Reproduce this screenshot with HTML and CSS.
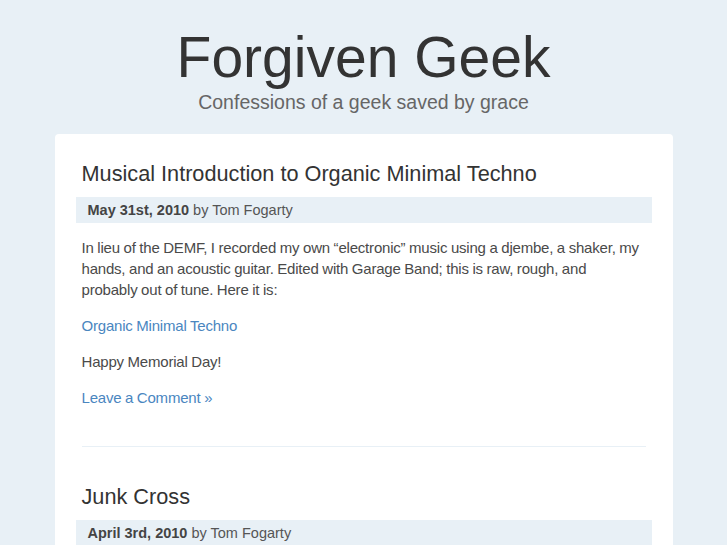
FILE: index.html
```html
<!DOCTYPE html>
<html>
<head>
<meta charset="utf-8">
<link rel="stylesheet" href="styles.css">
</head>
<body>
<header class="site-header">
  <h1 class="site-title">Forgiven Geek</h1>
  <p class="site-tagline">Confessions of a geek saved by grace</p>
</header>
<main class="card">
  <article class="post">
    <h2 class="post-title">Musical Introduction to Organic Minimal Techno</h2>
    <div class="post-meta"><strong>May 31st, 2010</strong> by Tom Fogarty</div>
    <div class="post-body">
      <p>In lieu of the DEMF, I recorded my own “electronic” music using a djembe, a shaker, my hands, and an acoustic guitar. Edited with Garage Band; this is raw, rough, and probably out of tune. Here it is:</p>
      <p><a href="#">Organic Minimal Techno</a></p>
      <p>Happy Memorial Day!</p>
      <p><a href="#">Leave a Comment »</a></p>
    </div>
  </article>
  <hr class="divider">
  <article class="post">
    <h2 class="post-title">Junk Cross</h2>
    <div class="post-meta"><strong>April 3rd, 2010</strong> by Tom Fogarty</div>
  </article>
</main>
</body>
</html>
```

FILE: styles.css
```css
html, body {
  margin: 0;
  padding: 0;
  background: #e8f0f6;
  font-family: "Liberation Sans", Arial, sans-serif;
  color: #444;
  overflow: hidden;
}

.site-header {
  text-align: center;
  padding-top: 22px;
}

.site-title {
  margin: 0;
  font-size: 57px;
  font-weight: normal;
  line-height: 70px;
  color: #333;
}

.site-tagline {
  margin: -2px 0 0;
  font-size: 19.5px;
  line-height: 24px;
  color: #666;
}

.card {
  width: 576px;
  margin: 20px auto 0;
  background: #fff;
  border-radius: 4px;
  padding: 22px 21px 40px 21px;
}

.post-title {
  margin: 0;
  padding: 0 6px;
  font-size: 21.7px;
  font-weight: normal;
  line-height: 36px;
  color: #333;
}

.post-meta {
  margin-top: 5px;
  height: 26px;
  line-height: 26px;
  padding: 0 12px;
  background: #e8f0f6;
  font-size: 14.5px;
  color: #555;
}

.post-meta strong {
  color: #444;
}

.post-body {
  padding: 0 6px;
  margin-top: 14px;
  font-size: 15px;
  line-height: 21px;
  letter-spacing: -0.2px;
  word-spacing: -0.3px;
  color: #4a4a4a;
}

.post-body p {
  margin: 0 0 15px;
}

.post-body a {
  color: #4a86bf;
  text-decoration: none;
}

.divider {
  border: 0;
  border-top: 1px solid #e8f0f6;
  margin: 38px 6px 32px;
}
```
